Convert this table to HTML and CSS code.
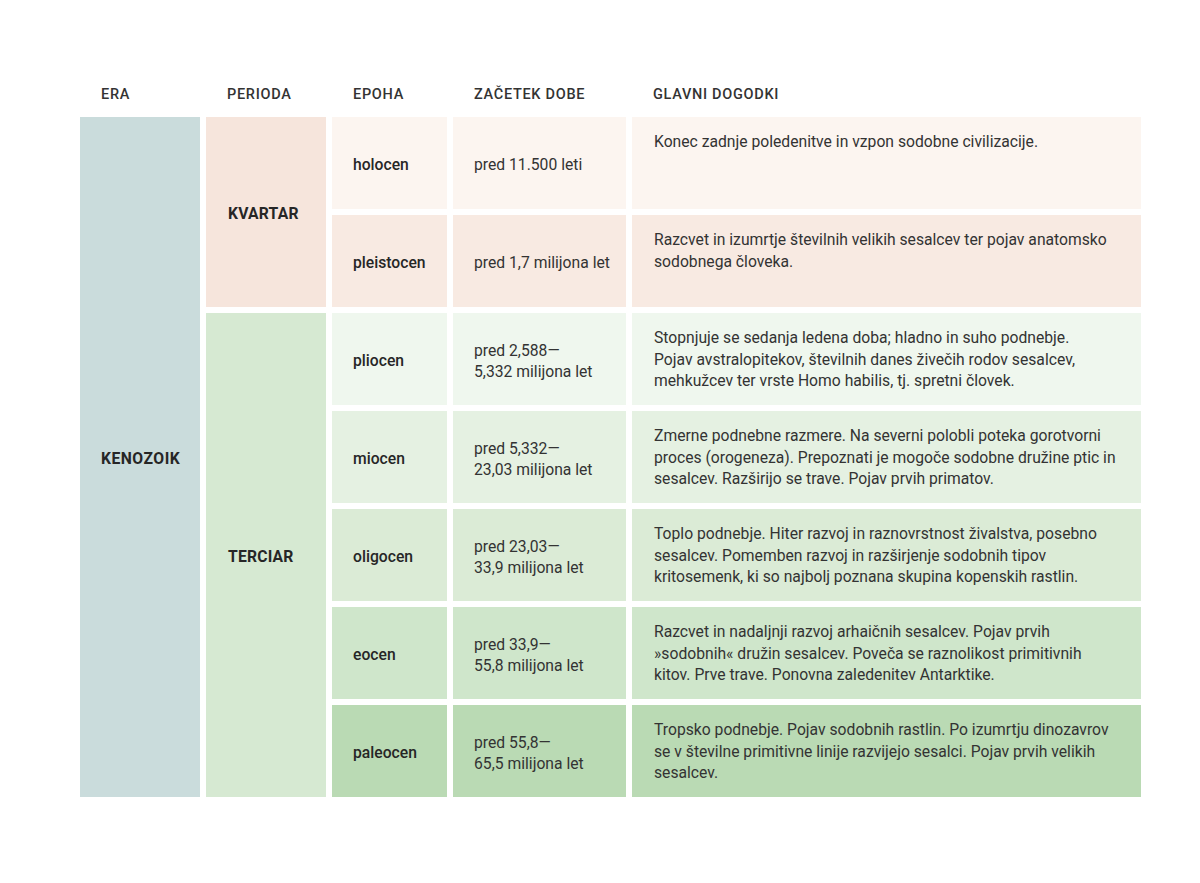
FILE: index.html
```html
<!DOCTYPE html>
<html lang="sl">
<head>
<meta charset="utf-8">
<title>Kenozoik</title>
<link rel="stylesheet" href="styles.css">
</head>
<body>
<div class="table">
  <div class="head">ERA</div>
  <div class="head">PERIODA</div>
  <div class="head">EPOHA</div>
  <div class="head">ZAČETEK DOBE</div>
  <div class="head">GLAVNI DOGODKI</div>

  <div class="cell era">KENOZOIK</div>
  <div class="cell period kvartar">KVARTAR</div>
  <div class="cell period terciar">TERCIAR</div>

  <div class="cell epoch r1">holocen</div>
  <div class="cell date r1">pred 11.500 leti</div>
  <div class="cell desc r1">Konec zadnje poledenitve in vzpon sodobne civilizacije.</div>

  <div class="cell epoch r2">pleistocen</div>
  <div class="cell date r2">pred 1,7 milijona let</div>
  <div class="cell desc r2">Razcvet in izumrtje številnih velikih sesalcev ter pojav anatomsko<br>sodobnega človeka.</div>

  <div class="cell epoch r3">pliocen</div>
  <div class="cell date r3">pred 2,588—<br>5,332 milijona let</div>
  <div class="cell desc r3">Stopnjuje se sedanja ledena doba; hladno in suho podnebje.<br>Pojav avstralopitekov, številnih danes živečih rodov sesalcev,<br>mehkužcev ter vrste Homo habilis, tj. spretni človek.</div>

  <div class="cell epoch r4">miocen</div>
  <div class="cell date r4">pred 5,332—<br>23,03 milijona let</div>
  <div class="cell desc r4">Zmerne podnebne razmere. Na severni polobli poteka gorotvorni<br>proces (orogeneza). Prepoznati je mogoče sodobne družine ptic in<br>sesalcev. Razširijo se trave. Pojav prvih primatov.</div>

  <div class="cell epoch r5">oligocen</div>
  <div class="cell date r5">pred 23,03—<br>33,9 milijona let</div>
  <div class="cell desc r5">Toplo podnebje. Hiter razvoj in raznovrstnost živalstva, posebno<br>sesalcev. Pomemben razvoj in razširjenje sodobnih tipov<br>kritosemenk, ki so najbolj poznana skupina kopenskih rastlin.</div>

  <div class="cell epoch r6">eocen</div>
  <div class="cell date r6">pred 33,9—<br>55,8 milijona let</div>
  <div class="cell desc r6">Razcvet in nadaljnji razvoj arhaičnih sesalcev. Pojav prvih<br>»sodobnih« družin sesalcev. Poveča se raznolikost primitivnih<br>kitov. Prve trave. Ponovna zaledenitev Antarktike.</div>

  <div class="cell epoch r7">paleocen</div>
  <div class="cell date r7">pred 55,8—<br>65,5 milijona let</div>
  <div class="cell desc r7">Tropsko podnebje. Pojav sodobnih rastlin. Po izumrtju dinozavrov<br>se v številne primitivne linije razvijejo sesalci. Pojav prvih velikih<br>sesalcev.</div>
</div>
</body>
</html>
```

FILE: styles.css
```css
html, body {
  margin: 0;
  padding: 0;
  background: #ffffff;
}

body {
  font-family: Roboto, "Liberation Sans", Arial, sans-serif;
  color: #2b2b2b;
  padding: 71px 0 0 80px;
}

.table {
  display: grid;
  grid-template-columns: 120px 120px 115px 173px 509px;
  grid-template-rows: 40px repeat(7, 92px);
  gap: 6px;
}

.head {
  font-size: 14.5px;
  font-weight: 500;
  letter-spacing: 0.7px;
  color: #333333;
  padding: 14px 0 0 21px;
  line-height: 20px;
}

.cell {
  box-sizing: border-box;
  padding-left: 21px;
  font-size: 15.7px;
  line-height: 21.5px;
  white-space: nowrap;
}

.era {
  grid-column: 1;
  grid-row: 2 / 9;
  background: #cadcdc;
  display: flex;
  align-items: center;
  font-weight: 700;
  letter-spacing: 0.5px;
  color: #262626;
  padding-top: 3px;
}

.period {
  grid-column: 2;
  display: flex;
  align-items: center;
  font-weight: 700;
  letter-spacing: 0.2px;
  color: #262626;
  padding-left: 22px;
  padding-top: 3px;
}

.kvartar {
  grid-row: 2 / 4;
  background: #f6e5dc;
}

.terciar {
  grid-row: 4 / 9;
  background: #d6e9d2;
}

.epoch {
  grid-column: 3;
  display: flex;
  align-items: center;
  font-weight: 500;
  color: #262626;
  padding-top: 4px;
}

.date {
  grid-column: 4;
  display: flex;
  align-items: center;
  color: #333333;
  padding-top: 4px;
}

.desc {
  grid-column: 5;
  padding: 14px 18px 0 22px;
  color: #333333;
}

.r1 { grid-row: 2; background: #fcf5f0; }
.r2 { grid-row: 3; background: #f8eae2; }
.r3 { grid-row: 4; background: #eff7ee; }
.r4 { grid-row: 5; background: #e5f1e2; }
.r5 { grid-row: 6; background: #dbebd6; }
.r6 { grid-row: 7; background: #cfe6cb; }
.r7 { grid-row: 8; background: #badab4; }
```
